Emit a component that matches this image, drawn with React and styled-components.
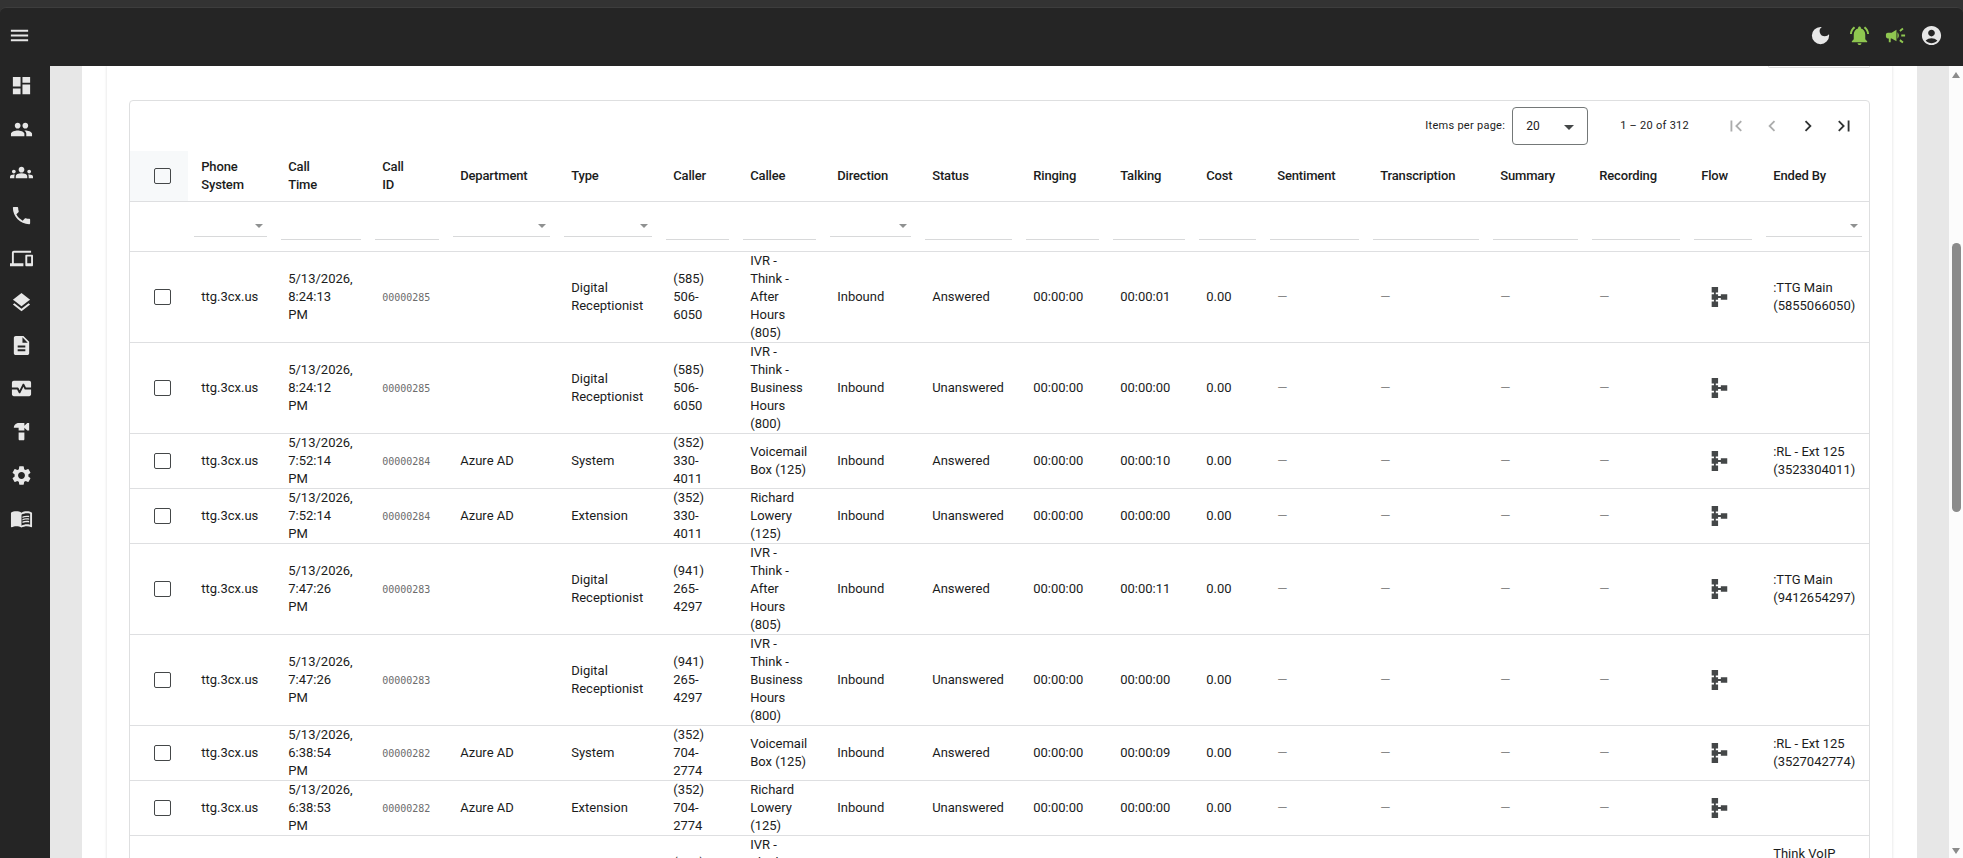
import styled, { createGlobalStyle } from "styled-components";
import {
	MdMenu,
	MdDashboard,
	MdPeople,
	MdGroups,
	MdPhone,
	MdDevices,
	MdLayers,
	MdDescription,
	MdMonitorHeart,
	MdHardware,
	MdSettings,
	MdMenuBook,
	MdDarkMode,
	MdNotificationsActive,
	MdCampaign,
	MdAccountCircle,
	MdFirstPage,
	MdLastPage,
	MdChevronLeft,
	MdChevronRight,
	MdSchema,
} from "react-icons/md";

const sideIcons = [
	MdDashboard,
	MdPeople,
	MdGroups,
	MdPhone,
	MdDevices,
	MdLayers,
	MdDescription,
	MdMonitorHeart,
	MdHardware,
	MdSettings,
	MdMenuBook,
];

const columns = [
	{ key: "system", label: "Phone System", width: 87, filter: "select" },
	{ key: "time", label: "Call Time", width: 94, filter: "text" },
	{ key: "id", label: "Call ID", width: 78, filter: "text" },
	{ key: "department", label: "Department", width: 111, filter: "select" },
	{ key: "type", label: "Type", width: 102, filter: "select" },
	{ key: "caller", label: "Caller", width: 77, filter: "text" },
	{ key: "callee", label: "Callee", width: 87, filter: "text" },
	{ key: "direction", label: "Direction", width: 95, filter: "select" },
	{ key: "status", label: "Status", width: 101, filter: "text" },
	{ key: "ringing", label: "Ringing", width: 87, filter: "text" },
	{ key: "talking", label: "Talking", width: 86, filter: "text" },
	{ key: "cost", label: "Cost", width: 71, filter: "text" },
	{ key: "sentiment", label: "Sentiment", width: 103, filter: "text" },
	{ key: "transcription", label: "Transcription", width: 120, filter: "text" },
	{ key: "summary", label: "Summary", width: 99, filter: "text" },
	{ key: "recording", label: "Recording", width: 102, filter: "text" },
	{ key: "flow", label: "Flow", width: 72, filter: "text" },
	{ key: "endedBy", label: "Ended By", width: 110, filter: "select" },
];

const AFTER = "IVR - Think - After Hours (805)";
const BUSINESS = "IVR - Think - Business Hours (800)";

const calls = [
	["8:24:13", "00000285", "", "Digital Receptionist", "(585) 506-6050", AFTER, "Answered", "00:00:01", ":TTG Main (5855066050)"],
	["8:24:12", "00000285", "", "Digital Receptionist", "(585) 506-6050", BUSINESS, "Unanswered", "00:00:00", ""],
	["7:52:14", "00000284", "Azure AD", "System", "(352) 330-4011", "Voicemail Box (125)", "Answered", "00:00:10", ":RL - Ext 125 (3523304011)"],
	["7:52:14", "00000284", "Azure AD", "Extension", "(352) 330-4011", "Richard Lowery (125)", "Unanswered", "00:00:00", ""],
	["7:47:26", "00000283", "", "Digital Receptionist", "(941) 265-4297", AFTER, "Answered", "00:00:11", ":TTG Main (9412654297)"],
	["7:47:26", "00000283", "", "Digital Receptionist", "(941) 265-4297", BUSINESS, "Unanswered", "00:00:00", ""],
	["6:38:54", "00000282", "Azure AD", "System", "(352) 704-2774", "Voicemail Box (125)", "Answered", "00:00:09", ":RL - Ext 125 (3527042774)"],
	["6:38:53", "00000282", "Azure AD", "Extension", "(352) 704-2774", "Richard Lowery (125)", "Unanswered", "00:00:00", ""],
	["6:31:40", "00000281", "", "Digital Receptionist", "(585) 506-6050", AFTER, "Answered", "00:00:12", "Think VoIP Solutions, Main Number (5855066050)"],
].map(([time, id, department, type, caller, callee, status, talking, endedBy]) => ({
	time: `5/13/2026, ${time} PM`,
	id,
	department,
	type,
	caller,
	callee,
	status,
	talking,
	endedBy,
}));

function CallRow({ call }) {
	return (
		<tr>
			<Cell $center>
				<Checkbox />
			</Cell>
			<Cell>ttg.3cx.us</Cell>
			<Cell $narrow>{call.time}</Cell>
			<Cell>
				<CallId>{call.id}</CallId>
			</Cell>
			<Cell>{call.department}</Cell>
			<Cell>{call.type}</Cell>
			<Cell>{call.caller}</Cell>
			<Cell $narrow>{call.callee}</Cell>
			<Cell>Inbound</Cell>
			<Cell>{call.status}</Cell>
			<Cell>00:00:00</Cell>
			<Cell>{call.talking}</Cell>
			<Cell>0.00</Cell>
			<Cell><Dash>—</Dash></Cell>
			<Cell><Dash>—</Dash></Cell>
			<Cell><Dash>—</Dash></Cell>
			<Cell><Dash>—</Dash></Cell>
			<Cell>
				<FlowIcon />
			</Cell>
			<Cell>{call.endedBy}</Cell>
		</tr>
	);
}

function App() {
	return (
		<>
			<GlobalStyle />
			<Page>
				<WindowStrip />
				<TopBar>
					<MdMenu size={23} />
					<TopActions>
						<ThemeIcon />
						<MdNotificationsActive color="#8fc750" />
						<MdCampaign color="#8fc750" />
						<MdAccountCircle />
					</TopActions>
				</TopBar>
				<Body>
					<Sidebar>
						{sideIcons.map((Icon, i) => (
							<Icon key={i} />
						))}
					</Sidebar>
					<Content>
						<Sheet>
							<Card>
								<ButtonRow>
									<OutlineButton />
								</ButtonRow>
								<TableBox>
									<Paginator>
										<span>Items per page:</span>
										<PageSize>
											20
											<Arrow $size={5} />
										</PageSize>
										<Range>1 – 20 of 312</Range>
										<PageButton $disabled><MdFirstPage /></PageButton>
										<PageButton $disabled><MdChevronLeft /></PageButton>
										<PageButton><MdChevronRight /></PageButton>
										<PageButton><MdLastPage /></PageButton>
									</Paginator>
									<Table>
										<colgroup>
											<Col $width={57} />
											{columns.map((c) => (
												<Col key={c.key} $width={c.width} />
											))}
										</colgroup>
										<thead>
											<tr>
												<HeadCell $center>
													<Checkbox />
												</HeadCell>
												{columns.map((c) => (
													<HeadCell key={c.key} $narrow={c.label.startsWith("Call ")}>
														{c.label}
													</HeadCell>
												))}
											</tr>
											<tr>
												<FilterCell />
												{columns.map((c) => (
													<FilterCell key={c.key}>
														<Filter $select={c.filter === "select"}>
															{c.filter === "select" && <Arrow $size={4} $light />}
														</Filter>
													</FilterCell>
												))}
											</tr>
										</thead>
										<tbody>
											{calls.map((call, i) => (
												<CallRow key={i} call={call} />
											))}
										</tbody>
									</Table>
								</TableBox>
							</Card>
						</Sheet>
					</Content>
					<ScrollTrack>
						<ScrollArrow />
						<ScrollThumb />
						<ScrollArrow $down />
					</ScrollTrack>
				</Body>
			</Page>
		</>
	);
}

const GlobalStyle = createGlobalStyle`
	* {
		box-sizing: border-box;
	}

	body {
		margin: 0;
		overflow: hidden;
		font-family: Roboto, sans-serif;
		font-size: 13px;
		line-height: 18px;
		color: #1b1c1c;
	}

	svg {
		display: block;
	}
`;

const Page = styled.div`
	display: flex;
	flex-direction: column;
	height: 858px;
	background: #333;
	overflow: hidden;
`;

const WindowStrip = styled.div`
	flex: none;
	height: 7px;
	background: #333;
`;

const TopBar = styled.header`
	flex: none;
	display: flex;
	align-items: center;
	justify-content: space-between;
	height: 59px;
	padding: 0 20px 3px 8px;
	border-top: 1px solid #3d3d3d;
	border-radius: 6px 6px 0 0;
	background: #252525;
	color: #e7e7e7;
`;

const TopActions = styled.div`
	display: flex;
	align-items: center;
	gap: 13px;

	svg {
		width: 23px;
		height: 23px;
	}
`;

const ThemeIcon = styled(MdDarkMode)`
	margin-right: 3px;
`;

const Body = styled.div`
	display: flex;
	height: 792px;
`;

const Sidebar = styled.nav`
	display: flex;
	flex-direction: column;
	flex: none;
	width: 50px;
	padding: 8.4px 0 0 10px;
	gap: 20.25px;
	background: #252525;
	color: #e7e7e7;

	svg {
		width: 23px;
		height: 23px;
	}
`;

const Content = styled.main`
	flex: 1;
	padding: 0 32px;
	background: #e7e7e7;
	overflow: hidden;
`;

const Sheet = styled.div`
	padding: 0 25px;
	background: #fff;
`;

const Card = styled.section`
	height: 900px;
	padding: 0 22px;
	box-shadow: 0 0 3px rgba(0, 0, 0, 0.14);
`;

const ButtonRow = styled.div`
	display: flex;
	justify-content: flex-end;
	height: 34px;
`;

const OutlineButton = styled.div`
	width: 102px;
	height: 2px;
	border: 1px solid #e0e0e0;
	border-top: 0;
	border-radius: 0 0 4px 4px;
`;

const TableBox = styled.div`
	border: 1px solid #dedfe0;
	border-radius: 4px;
`;

const Paginator = styled.div`
	display: flex;
	align-items: center;
	justify-content: flex-end;
	height: 50px;
	padding-right: 7px;
	font-size: 11px;
	letter-spacing: 0.27px;
`;

const PageSize = styled.div`
	display: flex;
	align-items: center;
	justify-content: space-between;
	width: 76px;
	height: 38px;
	margin: 0 32px 0 7px;
	padding: 0 13px;
	border: 1px solid #747878;
	border-radius: 4px;
	font-size: 12px;
	letter-spacing: 0;

	i {
		margin-top: 2px;
	}
`;

const Range = styled.span`
	margin-right: 29px;
`;

const PageButton = styled.span`
	display: flex;
	align-items: center;
	justify-content: center;
	width: 36px;
	opacity: ${({ $disabled }) => ($disabled ? 0.4 : 1)};
	color: #303333;

	svg {
		width: 22px;
		height: 22px;
	}
`;

const Arrow = styled.i`
	width: 0;
	height: 0;
	border: ${({ $size }) => $size}px solid transparent;
	border-top-color: ${({ $light }) => ($light ? "#8f9191" : "#444748")};
	border-bottom: 0;
`;

const Table = styled.table`
	width: 100%;
	table-layout: fixed;
	border-collapse: separate;
	border-spacing: 0;
`;

const Col = styled.col`
	width: ${({ $width }) => $width}px;
`;

const HeadCell = styled.th`
	height: 51px;
	padding: ${({ $center, $narrow }) => ($center ? "0" : `0 ${$narrow ? 34 : 20}px 0 14.2px`)};
	border-bottom: 1px solid #dedfe1;
	background: ${({ $center }) => ($center ? "#f7f9fa" : "none")};
	box-shadow: ${({ $center }) => ($center ? "1px 0 0 #f7f9fa" : "none")};
	font-weight: 500;
	letter-spacing: -0.15px;
	text-align: left;
`;

const FilterCell = styled.td`
	height: 50px;
	padding: 0 7px;
	border-bottom: 1px solid #dedfe1;
	vertical-align: top;
`;

const Filter = styled.div`
	display: flex;
	justify-content: flex-end;
	align-items: flex-end;
	height: ${({ $select }) => ($select ? 35 : 38)}px;
	padding: 0 4px 8px;
	border-bottom: 1px solid #d8d9da;
`;

const Cell = styled.td`
	padding: ${({ $center, $narrow }) => ($center ? "0" : `0 ${$narrow ? 14.5 : 11.5}px 0 14.2px`)};
	border-bottom: 1px solid #dedfe1;
`;

const CallId = styled.span`
	display: block;
	padding-top: 1px;
	font-family: "DejaVu Sans Mono", monospace;
	font-size: 10px;
	line-height: 17px;
	color: #6c6c6c;
`;

const Dash = styled.span`
	color: #888;
`;

const Checkbox = styled.span`
	display: block;
	width: 17px;
	height: 16px;
	margin-left: 24px;
	border: 1px solid #444748;
	border-radius: 2px;
`;

const FlowIcon = styled(MdSchema)`
	width: 22px;
	height: 22px;
	margin-left: 7px;
	color: #444748;
`;

const ScrollTrack = styled.div`
	display: flex;
	flex-direction: column;
	align-items: center;
	flex: none;
	width: 14px;
	padding: 6px 0 4px;
	background: #fcfcfc;
`;

const ScrollArrow = styled.i`
	width: 0;
	height: 0;
	border: 4px solid transparent;
	border-${({ $down }) => ($down ? "top" : "bottom")}: 6px solid #8b8b8b;
	border-${({ $down }) => ($down ? "bottom" : "top")}: 0;
	margin-top: ${({ $down }) => ($down ? "auto" : 0)};
`;

const ScrollThumb = styled.div`
	width: 9px;
	height: 269px;
	margin-top: 165px;
	border-radius: 5px;
	background: #8b8b8b;
`;

export default App;
